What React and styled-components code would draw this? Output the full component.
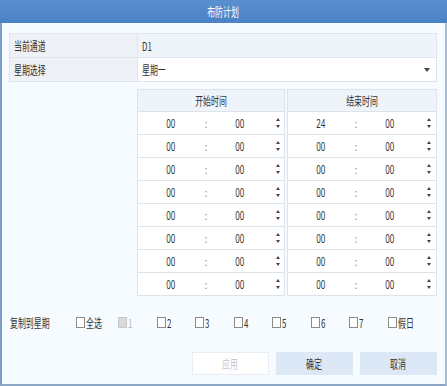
import React from "react"
import styled, { createGlobalStyle } from "styled-components"

const GlobalStyle = createGlobalStyle`
  html, body {
    margin: 0;
    padding: 0;
    background: #ffffff;
  }
  body {
    font-family: "Noto Sans CJK SC", "Noto Sans", sans-serif;
    font-size: 12px;
    color: #333333;
  }
`

// the screen font is a tall, narrow one: squeeze the glyphs horizontally
const Narrow = styled('span')`
  display: inline-block;
  white-space: nowrap;
  transform: scaleX(0.66);
  transform-origin: ${p => p.$origin || "center"};
`

const Dialog = styled('div')`
  width: 447px;
  height: 386px;
  box-sizing: border-box;
  background: #f6fbff;
  border-left: 2px solid #7f9fcb;
  border-right: 2px solid #a9bcd6;
  border-bottom: 2px solid #8ea6c6;
  display: flex;
  flex-direction: column;
`

const TitleBar = styled('div')`
  height: 23px;
  margin: 0 -2px;
  background: linear-gradient(#5a8fd0, #4b82c6);
  color: #ffffff;
  font-size: 12px;
  display: flex;
  align-items: center;
  justify-content: center;
`

const Body = styled('div')`
  padding: 10px 8px 0 7px;
  display: flex;
  flex-direction: column;
`

const InfoTable = styled('div')`
  display: grid;
  grid-template-columns: 128px 1fr;
  border: 1px solid #dfe5ec;
  border-bottom: none;
`

const Label = styled('div')`
  height: 23px;
  padding-left: 4px;
  display: flex;
  align-items: center;
  background: #eef2f6;
  border-bottom: 1px solid #dfe5ec;
  border-right: 1px solid #dfe5ec;
`

const Value = styled('div')`
  height: 23px;
  padding: 0 6px 0 4px;
  display: flex;
  align-items: center;
  justify-content: space-between;
  background: ${p => (p.$white ? "#ffffff" : "#eef4fa")};
  border-bottom: 1px solid #dfe5ec;
`

const Caret = styled('span')`
  width: 0;
  height: 0;
  border-left: 3px solid transparent;
  border-right: 3px solid transparent;
  border-top: 4px solid #444;
`

const TimeTable = styled('div')`
  margin: 7px 0 0 128px;
  display: grid;
  grid-template-columns: 148px 1fr;
  column-gap: 2px;
`

const Column = styled('div')`
  display: flex;
  flex-direction: column;
  border: 1px solid #dde3ea;
  border-bottom: none;
`

const Head = styled('div')`
  height: 21px;
  display: flex;
  align-items: center;
  justify-content: center;
  background: #eef4fa;
  border-bottom: 1px solid #dde3ea;
`

const TimeRow = styled('div')`
  height: 22px;
  display: grid;
  grid-template-columns: 66px 4px 64px 1fr;
  align-items: center;
  background: #ffffff;
  border-bottom: 1px solid #dde3ea;
`

const Num = styled('span')`
  text-align: center;
  font-family: "Noto Sans", sans-serif;
  font-size: 12px;
`

const Colon = styled('span')`
  text-align: center;
  color: #a0a0a0;
  font-size: 11px;
`

const Spinner = styled('span')`
  justify-self: center;
  display: flex;
  flex-direction: column;
  gap: 4px;
  align-items: center;
`

const Tri = styled('span')`
  width: 0;
  height: 0;
  border-left: 2.5px solid transparent;
  border-right: 2.5px solid transparent;
  ${p => (p.$up ? "border-bottom: 3px solid #444;" : "border-top: 3px solid #444;")}
`

const CopyRow = styled('div')`
  margin-top: 17px;
  display: flex;
  align-items: center;
  height: 18px;
`

const CopyLabel = styled('span')`
  width: 66px;
  padding-left: 1px;
`

const Check = styled('label')`
  width: ${p => (p.$wide ? "42px" : "38.5px")};
  display: flex;
  align-items: center;
  gap: 1px;
  color: ${p => (p.$disabled ? "#bbbbbb" : "#333333")};
  font-size: 12px;
`

const Box = styled('span')`
  flex: none;
  width: 7px;
  height: 9px;
  border: 1px solid ${p => (p.$disabled ? "#c8c8c8" : "#8a8a8a")};
  background: ${p => (p.$disabled ? "#d9d9d9" : "#ffffff")};
`

const Buttons = styled('div')`
  margin-top: 21px;
  display: flex;
  justify-content: flex-end;
  gap: 7px;
`

const Button = styled('button')`
  width: 77px;
  height: 23px;
  font-family: inherit;
  font-size: 12px;
  border: 1px solid ${p => (p.disabled ? "#e8eef4" : "#dce8f6")};
  background: ${p => (p.disabled ? "#ffffff" : "#dce8f6")};
  color: ${p => (p.disabled ? "#c4c8cc" : "#333333")};
  padding: 0;
`

const rows = [
  ["00", "00", "24", "00"],
  ["00", "00", "00", "00"],
  ["00", "00", "00", "00"],
  ["00", "00", "00", "00"],
  ["00", "00", "00", "00"],
  ["00", "00", "00", "00"],
  ["00", "00", "00", "00"],
  ["00", "00", "00", "00"],
]

const Time = ({ h, m }) => (
  <TimeRow>
    <Num><Narrow>{h}</Narrow></Num>
    <Colon>:</Colon>
    <Num><Narrow>{m}</Narrow></Num>
    <Spinner>
      <Tri $up />
      <Tri />
    </Spinner>
  </TimeRow>
)

const days = ["全选", "1", "2", "3", "4", "5", "6", "7", "假日"]

const App = () => {
  return (
    <>
      <GlobalStyle />
      <Dialog>
        <TitleBar><Narrow>布防计划</Narrow></TitleBar>
        <Body>
          <InfoTable>
            <Label><Narrow $origin="left">当前通道</Narrow></Label>
            <Value><Narrow $origin="left">D1</Narrow></Value>
            <Label><Narrow $origin="left">星期选择</Narrow></Label>
            <Value $white>
              <Narrow $origin="left">星期一</Narrow>
              <Caret />
            </Value>
          </InfoTable>

          <TimeTable>
            <Column>
              <Head><Narrow>开始时间</Narrow></Head>
              {rows.map((r, i) => <Time key={i} h={r[0]} m={r[1]} />)}
            </Column>
            <Column>
              <Head><Narrow>结束时间</Narrow></Head>
              {rows.map((r, i) => <Time key={i} h={r[2]} m={r[3]} />)}
            </Column>
          </TimeTable>

          <CopyRow>
            <CopyLabel><Narrow $origin="left">复制到星期</Narrow></CopyLabel>
            {days.map(d => (
              <Check key={d} $disabled={d === "1"} $wide={d === "全选"}>
                <Box $disabled={d === "1"} />
                <Narrow $origin="left">{d}</Narrow>
              </Check>
            ))}
          </CopyRow>

          <Buttons>
            <Button disabled><Narrow>应用</Narrow></Button>
            <Button><Narrow>确定</Narrow></Button>
            <Button><Narrow>取消</Narrow></Button>
          </Buttons>
        </Body>
      </Dialog>
    </>
  )
}

export default App
